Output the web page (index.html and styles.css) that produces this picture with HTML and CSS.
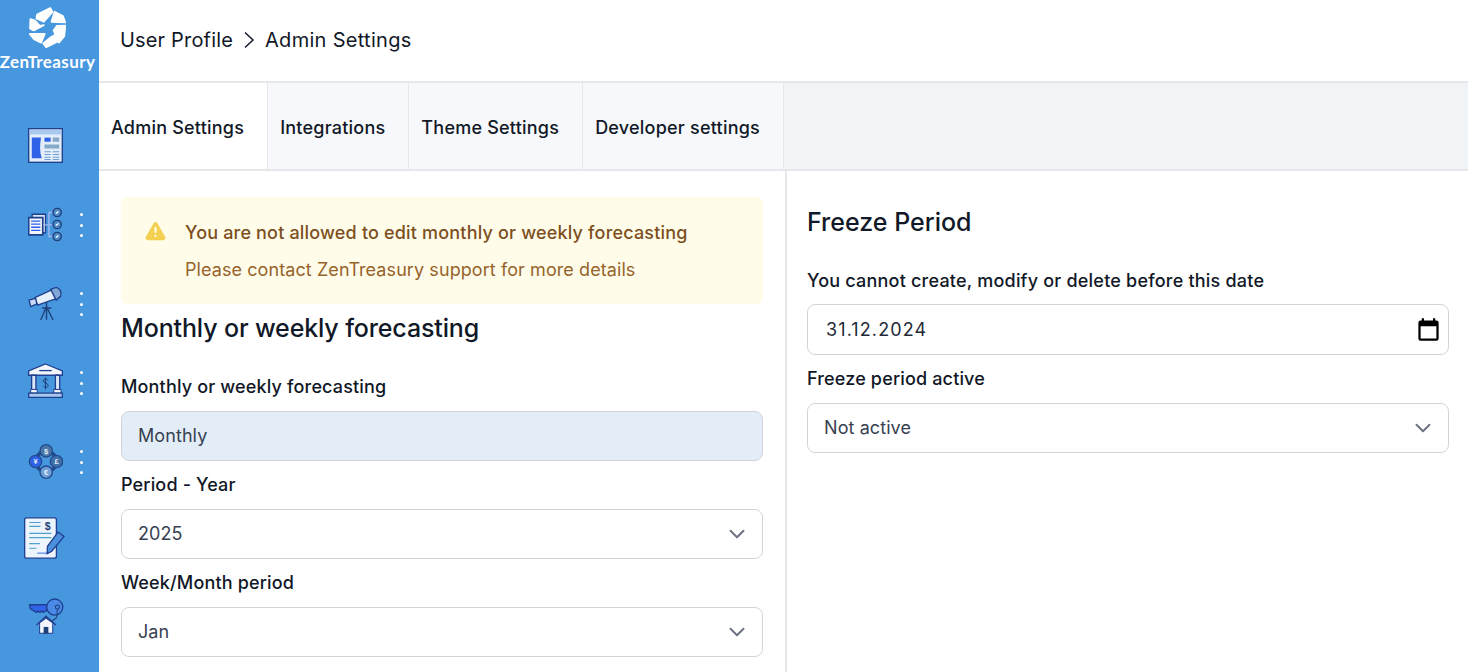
FILE: index.html
```html
<!DOCTYPE html>
<html lang="en">
<head>
<meta charset="utf-8">
<title>Admin Settings</title>
<link rel="stylesheet" href="styles.css">
</head>
<body>
<div class="app">
  <aside class="sidebar">
    <div class="logo">
      <svg class="logo-mark" viewBox="86 20 110 122"><g fill="#fff" stroke="#fff" stroke-width="5" stroke-linejoin="round"><path d="M110 42 149 23 156 35 130 64 108 54Z"/><path d="M162 34 187 47 194 66 153 64Z"/><path d="M194 75 191 107 175 126 159 90 169 76Z"/><path d="M168 100 173 122 137 140 128 128 152 109Z"/><path d="M88 100 133 100 122 126 101 116Z"/><path d="M90 56 104 60 118 76 130 74 100 90 89 84Z"/></g></svg>
      <div class="logo-text">ZenTreasury</div>
    </div>
    <nav class="nav">
      <div class="nav-item">
        <svg class="nav-icon" viewBox="84 384 102 102"><rect x="86" y="386" width="98" height="98" fill="#e3eefa" stroke="#1f3f8f" stroke-width="4"/><rect x="89" y="389" width="92" height="14" fill="#a9c8ee"/><path d="M95 412H122C118 435 118 455 124 472H95Z" fill="#2f62e6"/><path d="M132 412h18v12h-18z" fill="#2f62e6"/><path d="M156 412h19v12h-19zM132 432h43v12h-43z" fill="#86a8ca"/><path d="M132 453h18M156 453h19M132 461h18M156 461h19M132 469h18M156 469h19M132 476h18M156 476h19" stroke="#6f9fd0" stroke-width="3"/></svg>
      </div>
      <div class="nav-item has-more">
        <svg class="nav-icon" viewBox="84 50 102 102"><path d="M96 71h39v54H96z" fill="#dbe7f7" stroke="#1f3f8f" stroke-width="4"/><path d="M86 81h41v50H86z" fill="#f2f6fc" stroke="#1f3f8f" stroke-width="5"/><path d="M93 91h27M93 100h27M93 109h27M93 118h27" stroke="#2f62e6" stroke-width="4"/><path d="M156 66h-11v70h11M128 102h28" fill="none" stroke="#9db8ee" stroke-width="4"/><g fill="#4d8ac9" stroke="#1f3f78" stroke-width="4"><circle cx="169" cy="66" r="12"/><circle cx="169" cy="101" r="12"/><circle cx="169" cy="136" r="12"/></g><path d="M165 69l8-6M165 104l8-6M165 139l8-6" stroke="#fff" stroke-width="4"/></svg>
        <span class="more"><i></i><i></i><i></i></span>
      </div>
      <div class="nav-item has-more">
        <svg class="nav-icon" viewBox="84 286 102 102"><path d="M104 320 156 296 168 322 112 342Z" fill="#e6f0fb" stroke="#1f3f8f" stroke-width="4"/><path d="M87 327 106 322 110 338 92 346Z" fill="#c8dbf2" stroke="#1f3f8f" stroke-width="4"/><path d="M150 296 166 290C177 292 183 305 179 316L166 327Z" fill="#7fa7d6" stroke="#1f3f8f" stroke-width="4"/><path d="M138 334V384M138 346 121 385M138 346 157 385M125 350H152" fill="none" stroke="#1f3f78" stroke-width="4"/></svg>
        <span class="more"><i></i><i></i><i></i></span>
      </div>
      <div class="nav-item has-more">
        <svg class="nav-icon nav-icon-bank" viewBox="80 38 106 106"><path d="M133 41 184 62V75H82V62Z" fill="#f2f6fc" stroke="#1f3f8f" stroke-width="4"/><path d="M114 61h38" stroke="#1f3f8f" stroke-width="4"/><path d="M91 75h13v44H91zM163 75h13v44h-13z" fill="#dbe7f7" stroke="#1f3f8f" stroke-width="4"/><path d="M88 118h20v11H88zM158 118h22v11h-22z" fill="#f2f6fc" stroke="#1f3f8f" stroke-width="3"/><path d="M82 129h102v13H82z" fill="#a9c8ee" stroke="#1f3f8f" stroke-width="4"/><path d="M141 91c-3-6-15-6-15 1s15 6 15 14-12 7-15 1M133 82v36" fill="none" stroke="#1f3f78" stroke-width="3"/></svg>
        <span class="more"><i></i><i></i><i></i></span>
      </div>
      <div class="nav-item has-more">
        <svg class="nav-icon" viewBox="80 276 102 102"><circle cx="133" cy="327" r="30" fill="none" stroke="#1f4a8c" stroke-width="10"/><g stroke="#234a8c" stroke-width="4"><circle cx="133" cy="296" r="18" fill="#4a76a8"/><circle cx="163" cy="327" r="18" fill="#3f6fa8"/><circle cx="133" cy="358" r="18" fill="#6f9fd6"/><circle cx="102" cy="327" r="18" fill="#2f62e6"/></g><g class="wheel-text"><text x="133" y="304">$</text><text x="163" y="335">£</text><text x="133" y="366">€</text><text x="102" y="335">¥</text></g></svg>
        <span class="more"><i></i><i></i><i></i></span>
      </div>
      <div class="nav-item">
        <svg class="nav-icon nav-icon-doc" viewBox="72 22 124 126"><rect x="74" y="24" width="96" height="122" rx="6" fill="#edf4fb" stroke="#1f3f8f" stroke-width="4"/><path d="M88 38h34M88 50h34M88 71h67M88 84h67M88 102h32M88 116h22" stroke="#4ea0c9" stroke-width="3.500"/><text class="doc-dollar" x="144" y="60">$</text><path d="M112 131h34" stroke="#7da4f0" stroke-width="5"/><path d="M175 67 193 80 156 125 142 132 143 110Z" fill="#4c8fdc" stroke="#1f3f8f" stroke-width="4"/></svg>
      </div>
      <div class="nav-item">
        <svg class="nav-icon nav-icon-key" viewBox="80 264 106 110"><path d="M84 284H136V303H129L126 307 120 303 115 307 109 303 104 307 96 302 86 296Z" fill="#2f62e6" stroke="#1f3f8f" stroke-width="4" stroke-linejoin="round"/><circle cx="159" cy="291" r="24" fill="#4a8ae6" stroke="#1f3f8f" stroke-width="4"/><circle cx="167" cy="291" r="6" fill="none" stroke="#1f3f78" stroke-width="3"/><path d="M167 297 165 322 135 345" fill="none" stroke="#1f3f78" stroke-width="3"/><path d="M105 345 133 319 162 345" fill="#a9c8ee" stroke="#1f3f8f" stroke-width="5"/><path d="M114 338 133 324 153 338V369H114Z" fill="#f2f6fc" stroke="#1f3f8f" stroke-width="3"/><path d="M126 350h14v20h-14z" fill="#1f3f78"/></svg>
      </div>
    </nav>
  </aside>
  <main class="main">
    <header class="topbar">
      <span>User Profile</span>
      <svg class="crumb-sep" viewBox="0 0 12 18"><path d="M2 1.500 10 9 2 16.500" fill="none" stroke="#111827" stroke-width="1.500"/></svg>
      <span class="crumb-last">Admin Settings</span>
    </header>
    <div class="tabs">
      <div class="tab tab-active">Admin Settings</div>
      <div class="tab">Integrations</div>
      <div class="tab">Theme Settings</div>
      <div class="tab">Developer settings</div>
    </div>
    <div class="panels">
      <section class="panel panel-left">
        <div class="alert">
          <svg class="alert-icon" viewBox="0 0 20 20"><path fill-rule="evenodd" clip-rule="evenodd" d="M8.300 2.300c.8-1.300 2.600-1.300 3.400 0l7.600 13.500c.7 1.300-.2 2.900-1.700 2.900H2.400c-1.500 0-2.400-1.600-1.700-2.900Zm2.800 12.300a1.100 1.100 0 1 1-2.200 0 1.100 1.100 0 0 1 2.200 0ZM10 6a1 1 0 0 0-1 1v4a1 1 0 1 0 2 0V7a1 1 0 0 0-1-1Z" fill="#f3cf52"/></svg>
          <div class="alert-body">
            <div class="alert-title">You are not allowed to edit monthly or weekly forecasting</div>
            <div class="alert-text">Please contact ZenTreasury support for more details</div>
          </div>
        </div>
        <h2 class="heading heading-left">Monthly or weekly forecasting</h2>
        <label class="label label-first">Monthly or weekly forecasting</label>
        <div class="field field-disabled">Monthly</div>
        <label class="label">Period - Year</label>
        <div class="field">2025<svg class="chevron" viewBox="0 0 20 20"><path d="M5 7.500 10 12.500 15 7.500" fill="none" stroke="#6b7280" stroke-width="1.500" stroke-linecap="round" stroke-linejoin="round"/></svg></div>
        <label class="label">Week/Month period</label>
        <div class="field">Jan<svg class="chevron" viewBox="0 0 20 20"><path d="M5 7.500 10 12.500 15 7.500" fill="none" stroke="#6b7280" stroke-width="1.500" stroke-linecap="round" stroke-linejoin="round"/></svg></div>
      </section>
      <section class="panel panel-right">
        <h2 class="heading">Freeze Period</h2>
        <label class="label label-date">You cannot create, modify or delete before this date</label>
        <div class="field field-date">31.12.2024<svg class="calendar" viewBox="0 0 24 24"><path d="M19 4h-1V2h-2v2H8V2H6v2H5a2 2 0 0 0-2 2v14a2 2 0 0 0 2 2h14a2 2 0 0 0 2-2V6a2 2 0 0 0-2-2Zm0 16H5V9h14Z" fill="#000"/></svg></div>
        <label class="label">Freeze period active</label>
        <div class="field">Not active<svg class="chevron" viewBox="0 0 20 20"><path d="M5 7.500 10 12.500 15 7.500" fill="none" stroke="#6b7280" stroke-width="1.500" stroke-linecap="round" stroke-linejoin="round"/></svg></div>
      </section>
    </div>
  </main>
</div>
</body>
</html>
```

FILE: styles.css
```css
* { box-sizing: border-box; }
html, body { margin: 0; height: 100%; overflow: hidden; }
body { font-family: Inter, "Liberation Sans", sans-serif; color: #111827; background: #fff; }
.app { display: flex; height: 672px; }

.sidebar { width: 99px; flex: none; background: #4797df; color: #fff; }
.logo { height: 72px; padding: 7px 4px 0 0; display: flex; flex-direction: column; align-items: center; }
.logo-mark { width: 37px; height: 41px; }
.logo-text { font-family: Lato, "Liberation Sans", sans-serif; font-size: 17px; font-weight: 700; line-height: 20px; margin-top: 4px; letter-spacing: .4px; white-space: nowrap; }
.nav { margin-top: 48px; display: flex; flex-direction: column; }
.nav-item { height: 79px; display: flex; align-items: flex-start; justify-content: center; padding: 8px 8px 0 0; position: relative; }
.nav-icon { width: 35px; height: 35px; display: block; flex: none; }
.nav-icon-bank { margin-top: -2px; }
.nav-icon-doc { width: 41px; height: 42px; margin: -6px 0 0 -2px; }
.nav-icon-key { width: 36px; height: 37px; margin-top: -4px; }
.more { position: absolute; left: 80px; top: 14px; display: flex; flex-direction: column; gap: 7.500px; }
.more i { display: block; width: 3px; height: 3px; background: #fff; border-radius: 50%; }
.wheel-text text { font-family: "Liberation Sans", sans-serif; font-size: 22px; font-weight: 700; fill: #e3eefa; text-anchor: middle; }
.doc-dollar { font-family: "Liberation Sans", sans-serif; font-size: 32px; font-weight: 700; fill: #1f3f78; text-anchor: middle; }

.main { flex: 1; min-width: 0; display: flex; flex-direction: column; }
.topbar { height: 83px; flex: none; display: flex; align-items: center; gap: 10px; padding: 0 21px 2px; font-size: 20px; letter-spacing: .17px; border-bottom: 2px solid #e5e7eb; }
.crumb-sep { width: 12px; height: 18px; }
.crumb-last { letter-spacing: .3px; }

.tabs { height: 88px; flex: none; display: flex; background: #f1f4f7; border-bottom: 2px solid #e5e7eb; }
.tab { display: flex; align-items: center; padding: 2px 23px 0 12px; font-size: 18px; font-weight: 500; letter-spacing: .22px; background: #f7f8fb; border-right: 1px solid #e5e7eb; color: #111827; height: 86px; }
.tab-active { background: #fff; }

.panels { flex: 1; display: flex; min-height: 0; }
.panel { padding: 0 22px; }
.panel-left { width: 688px; padding-top: 26px; border-right: 2px solid #e5e7eb; }
.panel-right { flex: 1; padding: 35px 19px 0 20px; }

.alert { height: 107px; background: #fffdea; border-radius: 6px; display: flex; padding: 23px 22px 0 24px; gap: 19px; }
.alert-icon { width: 21px; height: 22px; flex: none; }
.alert-title { font-size: 18px; font-weight: 500; letter-spacing: .18px; line-height: 26px; color: #7d4f20; }
.alert-text { font-size: 18px; letter-spacing: .08px; line-height: 26px; margin-top: 11px; color: #96632a; }

.heading { margin: 0; font-size: 25px; font-weight: 500; line-height: 32px; color: #111827; }
.heading-left { margin-top: 8px; letter-spacing: -.14px; }

.label { display: block; font-size: 18px; font-weight: 500; letter-spacing: .16px; line-height: 24px; color: #111827; margin: 12px 0 12px; }
.label-first { margin-top: 31px; }
.label-date { margin-top: 31px; margin-bottom: 11px; letter-spacing: .21px; }
.field { height: 50px; border: 1px solid #d1d5db; border-radius: 8px; padding: 0 12px 2px 16px; display: flex; align-items: center; justify-content: space-between; font-size: 18px; letter-spacing: .08px; color: #374151; background: #fff; }
.field-disabled { background: #e3edf7; }
.field-date { height: 51px; letter-spacing: 1.1px; color: #1f2937; padding: 0 6px 0 18px; }
.chevron { width: 26px; height: 26px; flex: none; margin-top: 2px; }
.calendar { width: 27px; height: 27px; flex: none; }
```
